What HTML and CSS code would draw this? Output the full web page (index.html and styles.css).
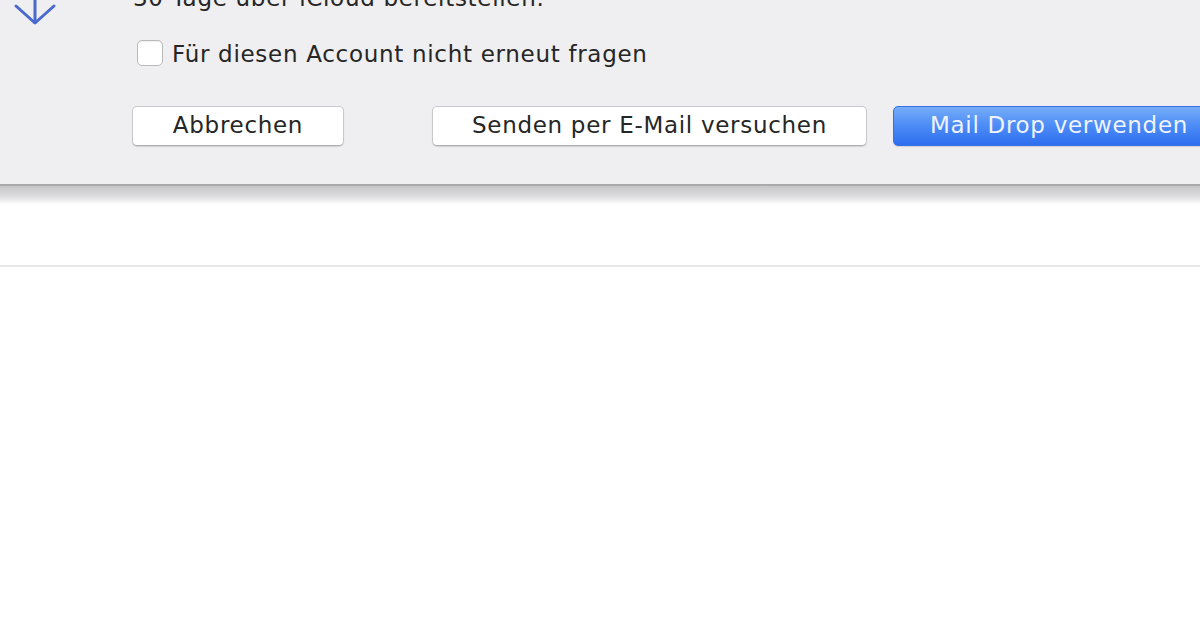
FILE: index.html
```html
<!DOCTYPE html>
<html lang="de">
<head>
<meta charset="utf-8">
<title>Mail Drop</title>
<link rel="stylesheet" href="styles.css">
</head>
<body>
<div class="sheet">
  <svg class="icon" width="60" height="30" viewBox="0 0 60 30" aria-hidden="true">
    <path d="M35 -4 V22.5" fill="none" stroke="#4a69cf" stroke-width="3" stroke-linecap="round"/>
    <path d="M16 6 L35 23 L54 6" fill="none" stroke="#4a69cf" stroke-width="3" stroke-linecap="round" stroke-linejoin="round"/>
  </svg>
  <div class="content">
    <p class="info">30 Tage über iCloud bereitstellen.</p>
    <label class="check-row">
      <span class="checkbox"></span>
      <span class="check-label">Für diesen Account nicht erneut fragen</span>
    </label>
    <div class="buttons">
      <button class="btn btn-cancel">Abbrechen</button>
      <button class="btn btn-send">Senden per E-Mail versuchen</button>
      <button class="btn btn-primary">Mail Drop verwenden</button>
    </div>
  </div>
</div>
<div class="sheet-shadow"></div>
<div class="list">
  <div class="list-row"></div>
</div>
</body>
</html>
```

FILE: styles.css
```css
html, body {
  margin: 0;
  padding: 0;
  background: #ffffff;
  overflow: hidden;
  width: 1200px;
  height: 628px;
}

body {
  font-family: "DejaVu Sans", "Liberation Sans", sans-serif;
  font-size: 23px;
  letter-spacing: 0.7px;
  color: #262626;
}

.sheet {
  height: 186px;
  box-sizing: border-box;
  background: #efeef0;
  border-bottom: 2px solid #a9a9ab;
  display: flex;
  align-items: flex-start;
  overflow: hidden;
}

.icon {
  flex: none;
  display: block;
}

.content {
  margin-left: 72px;
  display: flex;
  flex-direction: column;
  flex: none;
}

.info {
  margin: -16px 0 0 1px;
  line-height: 28px;
  white-space: nowrap;
}

.check-row {
  display: flex;
  align-items: flex-start;
  margin-top: 28px;
}

.checkbox {
  flex: none;
  width: 26px;
  height: 26px;
  box-sizing: border-box;
  margin-top: 0;
  margin-left: 5px;
  background: #ffffff;
  border: 1px solid #b9b9bb;
  border-radius: 5px;
  box-shadow: inset 0 1px 1px rgba(0, 0, 0, 0.06);
}

.check-label {
  margin-left: 9px;
  line-height: 28px;
  white-space: nowrap;
}

.buttons {
  display: flex;
  margin-top: 38px;
}

.btn {
  flex: none;
  height: 40px;
  box-sizing: border-box;
  padding: 0 0 1px 0;
  font-family: inherit;
  font-size: 23px;
  letter-spacing: 0.7px;
  line-height: 37px;
  color: #262626;
  background: #ffffff;
  border: 1px solid #c9c9cb;
  border-bottom-color: #adadb0;
  border-radius: 5px;
  box-shadow: 0 1px 1px rgba(0, 0, 0, 0.12);
  white-space: nowrap;
  text-align: center;
}

.btn-cancel {
  width: 212px;
}

.btn-send {
  width: 435px;
  margin-left: 88px;
}

.btn-primary {
  width: 332px;
  margin-left: 26px;
  color: #eef3ff;
  border: 1px solid #3672e6;
  background: linear-gradient(#76adf8 0%, #4f8ef6 45%, #2e6ef0 100%);
}

.sheet-shadow {
  height: 18px;
  background: linear-gradient(#c6c6c8 0%, #d4d4d6 35%, #e2e2e4 65%, #f4f4f5 88%, #ffffff 100%);
}

.list {
  background: #ffffff;
}

.list-row {
  height: 61px;
  border-bottom: 2px solid #e8e8ea;
}
```
